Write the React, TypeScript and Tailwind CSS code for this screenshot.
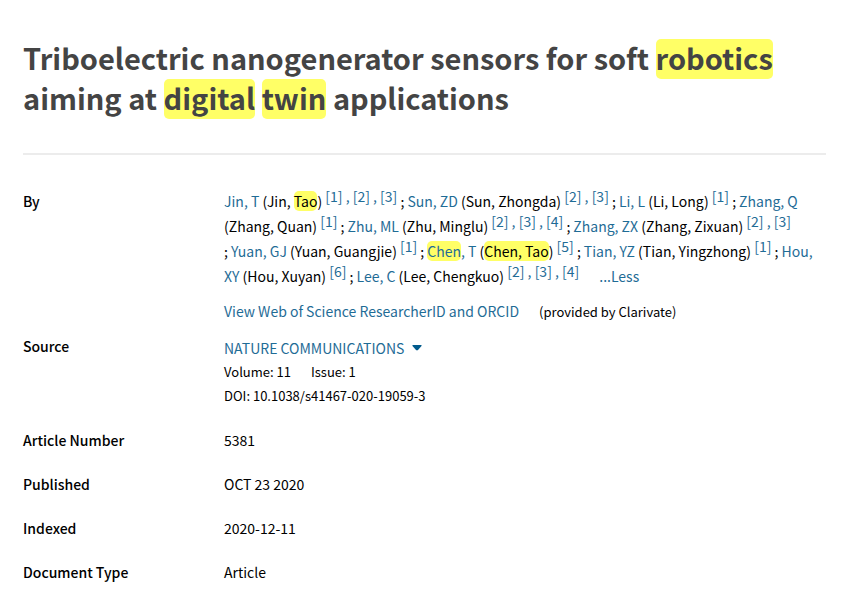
import type { ReactNode } from "react";

type Author = { short: ReactNode; full: ReactNode; refs: number[] };

function Mark({ children }: { children: ReactNode }) {
  return <mark className="inline-block rounded-[5px] bg-[#ffff66] leading-5 text-inherit">{children}</mark>;
}

function TitleMark({ children }: { children: ReactNode }) {
  return (
    <mark className="-mb-1 inline-block rounded-[5px] bg-[#ffff66] pb-1 leading-9 text-inherit">{children}</mark>
  );
}

const authors: Author[] = [
  { short: "Jin, T", full: <>Jin, <Mark>Tao</Mark></>, refs: [1, 2, 3] },
  { short: "Sun, ZD", full: "Sun, Zhongda", refs: [2, 3] },
  { short: "Li, L", full: "Li, Long", refs: [1] },
  { short: "Zhang, Q", full: "Zhang, Quan", refs: [1] },
  { short: "Zhu, ML", full: "Zhu, Minglu", refs: [2, 3, 4] },
  { short: "Zhang, ZX", full: "Zhang, Zixuan", refs: [2, 3] },
  { short: "Yuan, GJ", full: "Yuan, Guangjie", refs: [1] },
  { short: <><Mark>Chen</Mark>, T</>, full: <Mark>Chen, Tao</Mark>, refs: [5] },
  { short: "Tian, YZ", full: "Tian, Yingzhong", refs: [1] },
  { short: "Hou, XY", full: "Hou, Xuyan", refs: [6] },
  { short: "Lee, C", full: "Lee, Chengkuo", refs: [2, 3, 4] },
];

const link = "text-[#1f6c96]";

function AuthorEntry({ author, first }: { author: Author; first: boolean }) {
  return (
    <>
      {!first && " ;"}
      <a href="#author" className={link + (first ? "" : " ml-[3px]")}>{author.short}</a>{" "}
      ({author.full}){" "}
      <span className={"relative -top-[5px] whitespace-nowrap " + link}>
        {author.refs.map((n, i) => (
          <span key={n}>
            {i > 0 && " , "}
            <a href="#address">{`[${n}]`}</a>
          </span>
        ))}
      </span>
    </>
  );
}

function Row({ label, children }: { label: string; children: ReactNode }) {
  return (
    <div className="flex">
      <dt className="w-[201px] shrink-0 font-medium">{label}</dt>
      <dd className="min-w-0 flex-1">{children}</dd>
    </div>
  );
}

export default function App() {
  return (
    <main className="bg-white pt-[37px] pr-[22px] pl-[23px] font-['Noto_Sans_CJK_SC',sans-serif] text-[14px] leading-6 text-black">
      <h1 className="border-b-2 border-[#ececec] pb-9 text-[29px] leading-10 font-bold text-[#444444]">
        Triboelectric nanogenerator sensors for soft <TitleMark>robotics</TitleMark> aiming at{" "}
        <TitleMark>digital</TitleMark> <TitleMark>twin</TitleMark> applications
      </h1>
      <dl className="flex flex-col gap-5 pt-[34px]">
        <div className="-mb-2.5">
          <Row label="By">
            <div className="leading-[25px]">
              {authors.map((author, i) => (
                <AuthorEntry key={i} author={author} first={i === 0} />
              ))}
              <button type="button" className={"ml-5 " + link}>...Less</button>
            </div>
            <p className="mt-2.5 flex items-baseline gap-5">
              <a href="#researcher" className={link}>View Web of Science ResearcherID and ORCID</a>
              <span className="text-[13px]">(provided by Clarivate)</span>
            </p>
          </Row>
        </div>
        <Row label="Source">
          <button type="button" className={"flex items-center gap-2 pt-0.5 " + link}>
            NATURE COMMUNICATIONS
            <svg width="10" height="6" viewBox="0 0 10 6" fill="#005a8c" aria-hidden="true">
              <path d="M.5 0h9v1L5.8 5.2H4.2L.5 1z" />
            </svg>
          </button>
          <p className="flex gap-5 text-[13px]"><span>Volume: 11</span><span>Issue: 1</span></p>
          <p className="text-[13px]">DOI: 10.1038/s41467-020-19059-3</p>
        </Row>
        <Row label="Article Number">5381</Row>
        <Row label="Published">OCT 23 2020</Row>
        <Row label="Indexed">2020-12-11</Row>
        <Row label="Document Type">Article</Row>
      </dl>
    </main>
  );
}
